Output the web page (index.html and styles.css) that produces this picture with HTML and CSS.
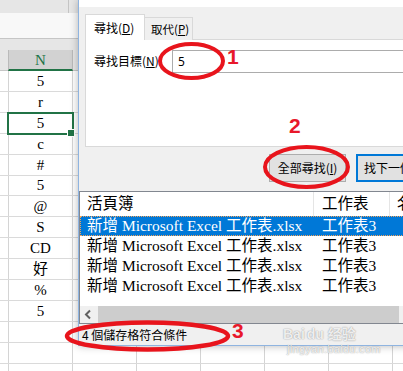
FILE: index.html
```html
<!DOCTYPE html>
<html lang="zh-Hant">
<head>
<meta charset="utf-8">
<link rel="stylesheet" href="styles.css">
</head>
<body>
<div class="screen">
  <div class="sheet">
    <div class="sheet-top"></div>
    <div class="sheet-formula"></div>
    <div class="sheet-gap"></div>
    <div class="colhead">
      <div class="h hm"></div>
      <div class="h hn">N</div>
      <div class="h hrest"></div>
    </div>
    <div class="sheet-body">
      <div class="coln">
        <div class="cell">5</div>
        <div class="cell">r</div>
        <div class="cell sel">5</div>
        <div class="cell">c</div>
        <div class="cell">#</div>
        <div class="cell">5</div>
        <div class="cell">@</div>
        <div class="cell">S</div>
        <div class="cell">CD</div>
        <div class="cell">好</div>
        <div class="cell">%</div>
        <div class="cell">5</div>
        <div class="cell"></div>
        <div class="cell"></div>
      </div>
    </div>
  </div>

  <div class="dialog">
    <div class="titlebar"></div>
    <div class="tabs">
      <div class="tab active">尋找(<u>D</u>)</div>
      <div class="tab">取代(<u>P</u>)</div>
    </div>
    <div class="panel">
      <div class="findrow">
        <span class="label">尋找目標(<u>N</u>)</span>
        <div class="input">5</div>
      </div>
    </div>
    <div class="buttons">
      <div class="btn">全部尋找(<u>I</u>)</div>
      <div class="btn primary">找下一個(<u>F</u>)</div>
    </div>
    <div class="list">
      <div class="lhead">
        <div class="c1">活頁簿</div>
        <div class="c2">工作表</div>
        <div class="c3">名</div>
      </div>
      <div class="row sel"><div class="c1">新增 Microsoft Excel 工作表.xlsx</div><div class="c2">工作表3</div></div>
      <div class="row"><div class="c1">新增 Microsoft Excel 工作表.xlsx</div><div class="c2">工作表3</div></div>
      <div class="row"><div class="c1">新增 Microsoft Excel 工作表.xlsx</div><div class="c2">工作表3</div></div>
      <div class="row"><div class="c1">新增 Microsoft Excel 工作表.xlsx</div><div class="c2">工作表3</div></div>
      <div class="filler"></div>
      <div class="hscroll">
        <div class="sbtn"><svg width="17" height="17" viewBox="0 0 17 17"><path d="M10 4.5 L6 8.5 L10 12.5" fill="none" stroke="#606060" stroke-width="2"/></svg></div>
        <div class="thumb"></div>
      </div>
    </div>
    <div class="status">4 個儲存格符合條件</div>
  </div>

  <svg class="marks" width="403" height="371" viewBox="0 0 403 371">
    <ellipse cx="191.5" cy="61" rx="31.5" ry="17" fill="none" stroke="#e8141c" stroke-width="4"/>
    <ellipse cx="306.5" cy="167" rx="41.5" ry="20" fill="none" stroke="#e8141c" stroke-width="4"/>
    <ellipse cx="147.5" cy="336" rx="80.5" ry="13.5" fill="none" stroke="#e8141c" stroke-width="4.5"/>
    <text x="227" y="63.5" class="num">1</text>
    <text x="289" y="132.5" class="num">2</text>
    <text x="232" y="337.5" class="num">3</text>
  </svg>

  <div class="watermark">
    <div class="wm-logo">Bai<span class="du">du</span> 经验</div>
    <div class="wm-url">jingyan.baidu.com</div>
  </div>
</div>
</body>
</html>
```

FILE: styles.css
```css
* { box-sizing: border-box; margin: 0; padding: 0; }
body {
  width: 403px;
  height: 371px;
  overflow: hidden;
  background: #fff;
  font-family: "Noto Sans CJK TC", "Noto Sans", sans-serif;
  color: #000;
}
.screen { position: relative; width: 403px; height: 371px; overflow: hidden; }

/* Spreadsheet */
.sheet-top {
  height: 13px;
  background: #e6e6e6 linear-gradient(to right, transparent 68px, #c4c4c4 68px 69px, transparent 69px);
}
.sheet-formula { height: 26px; background: #f8f8f8; border-bottom: 1px solid #c6c6c6; }
.sheet-gap { height: 11px; background: #e6e6e6; }
.colhead { display: flex; height: 21px; background: #e6e6e6; }
.h { height: 21px; border-bottom: 1px solid #c6c6c6; }
.hm { width: 8px; }
.hn {
  width: 65px;
  background: #d2d2d2;
  border-left: 1px solid #bababa;
  border-right: 1px solid #bababa;
  border-bottom: 2px solid #217346;
  color: #217346;
  text-align: center;
  font: 15px/20px "Liberation Serif", serif;
}
.hrest { flex: 1; }
.sheet-body {
  height: 300px;
  display: flex;
  background-image:
    repeating-linear-gradient(to bottom, transparent 0 19.9px, #dadada 19.9px 20.9px),
    repeating-linear-gradient(to right, #d4d4d4 0 1px, transparent 1px 64px);
  background-position: 0 0, 8px 0;
}
.coln { margin-left: 8px; width: 65px; display: flex; flex-direction: column; }
.cell {
  height: 20.9px;
  line-height: 20px;
  text-align: center;
  font-size: 15px;
  font-family: "Liberation Serif", "Noto Sans CJK TC", serif;
}
.cell.sel { position: relative; outline: 2px solid #217346; outline-offset: -1px; }
.cell.sel::after {
  content: "";
  position: absolute;
  right: -2px;
  bottom: -3px;
  width: 6px;
  height: 6px;
  background: #217346;
  border: 1px solid #fff;
}

/* Dialog */
.dialog {
  position: absolute;
  left: 78px;
  top: 0;
  width: 340px;
  height: 346px;
  background: #f0f0f0;
  border-left: 1px solid #8fb4e0;
  border-bottom: 1px solid #8fb4e0;
  box-shadow: 0 0 8px rgba(0, 0, 0, 0.28);
  font-size: 12px;
  white-space: nowrap;
}
.titlebar { height: 7px; background: #fff; }
.tabs { display: flex; align-items: flex-end; height: 26px; margin-top: 7px; padding-left: 6px; }
.tab {
  height: 23px;
  width: 48px;
  padding-left: 6px;
  line-height: 22px;
  border: 1px solid #d9d9d9;
  border-left: none;
  border-bottom: none;
  background: #f0f0f0;
  overflow: hidden;
  font-size: 11.5px;
}
.tab.active {
  position: relative;
  z-index: 1;
  width: 60px;
  height: 26px;
  padding-left: 8px;
  line-height: 25px;
  background: #fff;
  border-left: 1px solid #d9d9d9;
  font-size: 12px;
}
.panel {
  margin-top: -1px;
  margin-left: 6px;
  width: 400px;
  height: 108px;
  background: #fff;
  border: 1px solid #d9d9d9;
  padding-top: 10px;
  padding-left: 8px;
}
.findrow { display: flex; align-items: center; height: 22px; }
.label { width: 78px; flex: none; line-height: 22px; }
.input {
  width: 300px;
  flex: none;
  height: 23px;
  border: 1px solid #acacac;
  padding-left: 5px;
  line-height: 21px;
  font-family: "Noto Sans", sans-serif;
  font-size: 12px;
}
.buttons { display: flex; height: 28px; margin-top: 7px; padding-left: 190px; gap: 10px; }
.btn {
  width: 77px;
  flex: none;
  height: 28px;
  border: 1px solid #adadad;
  background: #e1e1e1;
  text-align: center;
  line-height: 26px;
}
.btn.primary {
  width: 100px;
  border: 2px solid #0078d7;
  text-align: left;
  padding-left: 6px;
  line-height: 24px;
}
.list {
  margin-top: 9px;
  width: 330px;
  height: 133px;
  border: 1px solid #828790;
  background: #fff;
  display: flex;
  flex-direction: column;
  font-family: "Liberation Serif", "Noto Sans CJK TC", serif;
  font-size: 15.5px;
}
.lhead { height: 24px; display: flex; line-height: 24px; }
.row { height: 20px; display: flex; line-height: 20px; }
.c1 { width: 233px; flex: none; padding-left: 7px; overflow: hidden; }
.c2 { width: 76px; flex: none; padding-left: 8px; }
.c3 { flex: 1; padding-left: 7px; overflow: hidden; }
.lhead .c2, .lhead .c3 { border-left: 1px solid #e5e5e5; }
.row .c2 { padding-left: 9px; }
.row.sel { background: #0078d7; color: #fff; outline: 1px dotted #f4a35a; outline-offset: -1px; }
.filler { flex: 1; }
.hscroll { height: 17px; display: flex; background: #f0f0f0; }
.sbtn { width: 17px; height: 17px; }
.sbtn svg { display: block; }
.thumb { width: 301px; height: 17px; margin-left: 1px; background: #cdcdcd; }
.status { height: 21px; line-height: 21px; padding-left: 3px; font-size: 12px; }

/* Annotations */
.marks { position: absolute; left: 0; top: 0; }
.num { font: bold 21px "Liberation Sans", Arial, sans-serif; fill: #e8182a; }

.watermark {
  position: absolute;
  left: 283px;
  top: 326px;
  color: rgba(255, 255, 255, 0.85);
  text-shadow: 0 0 1px rgba(0, 0, 0, 0.35), 0 0 2px rgba(0, 0, 0, 0.15);
  font-family: "Liberation Sans", "Noto Sans CJK SC", sans-serif;
}
.wm-logo { font-size: 14px; font-weight: bold; line-height: 17px; white-space: nowrap; }
.wm-logo .du { margin-left: 2px; }
.wm-url { font-size: 11px; line-height: 13px; margin-left: 4px; letter-spacing: 0.3px; white-space: nowrap; }
```
